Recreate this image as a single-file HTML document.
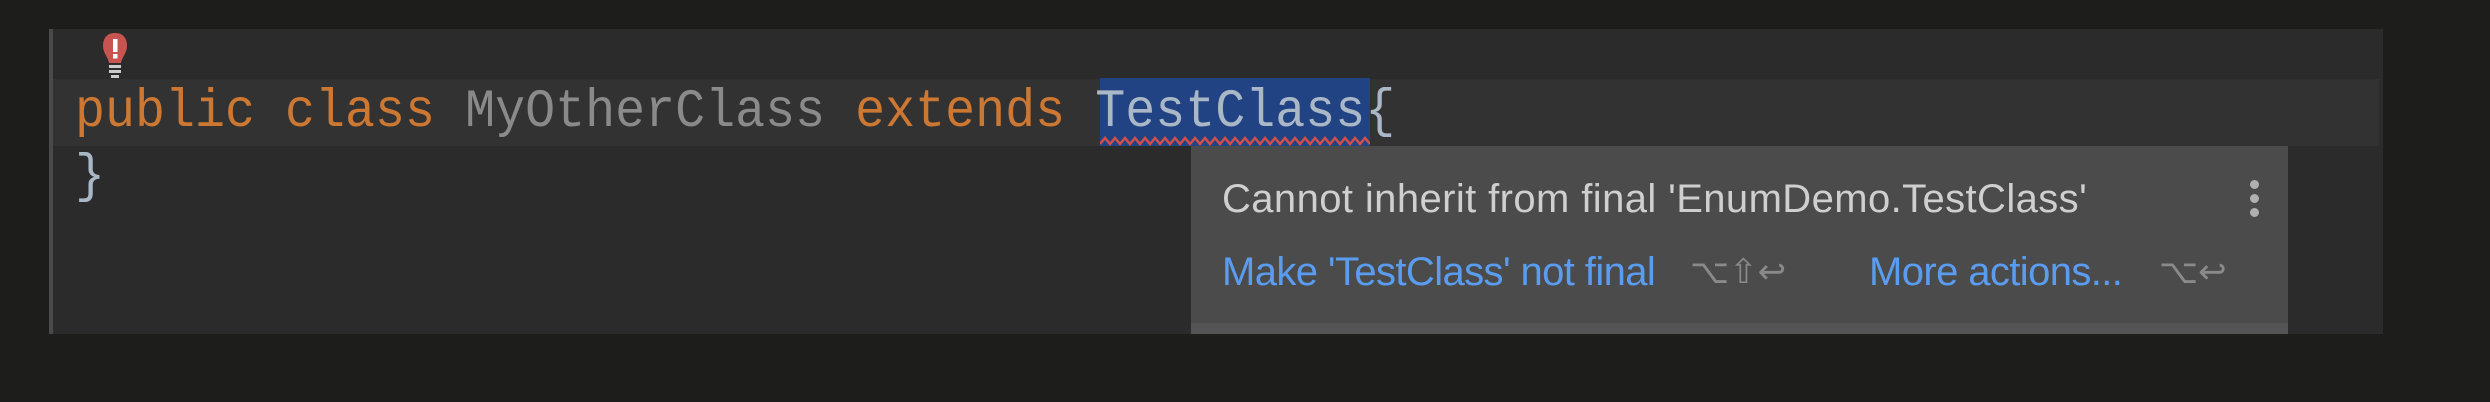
<!DOCTYPE html>
<html><head><style>
body{margin:0;width:2490px;height:402px;background:#1d1d1b;position:relative;overflow:hidden;font-family:"Liberation Mono",monospace}
.ed{position:absolute;left:49px;top:29px;width:2330px;height:305px;background:#2b2b2b;border-left:4px solid #4a4a4a}
.cur{position:absolute;left:53px;top:79px;width:2326px;height:67px;background:#323232}
.code{position:absolute;left:75px;font-size:50px;white-space:pre;line-height:67px;transform:scaleY(1.08);transform-origin:0 50%}
.k{color:#cc7832}.g{color:#8a8a8a}.t{color:#a9b7c6}
.sel{position:absolute;left:1100px;top:78px;width:270px;height:68px;background:#214283}
.pop{position:absolute;left:1191px;top:146px;width:1097px;height:188px;background:#4b4b4b;font-family:"Liberation Sans",sans-serif}
.pop .strip{position:absolute;left:0;bottom:0;width:100%;height:11px;background:#545454}
.msg{position:absolute;left:31px;top:30px;font-size:40px;line-height:46px;color:#cfcfcf;letter-spacing:0.4px;white-space:nowrap}
.lk{position:absolute;top:103px;font-size:40px;line-height:46px;color:#5a9cf0;white-space:nowrap;letter-spacing:-0.6px}
.sc{position:absolute;top:105px;font-size:34px;line-height:42px;color:#8a8a8a;white-space:nowrap}
.dot{position:absolute;left:1059px;width:9px;height:9px;border-radius:50%;background:#b0b0b0}
</style></head><body>
<div class="ed"></div>
<div class="cur"></div>
<div class="sel"></div>
<svg style="position:absolute;left:100px;top:32px" width="30" height="46" viewBox="0 0 30 46">
<path d="M15 1C7 1 3 6 3 14c0 7 5 11 6 17h12c1-6 6-10 6-17C27 6 23 1 15 1z" fill="#c75450"/>
<rect x="13" y="7" width="4.5" height="13" fill="#fff"/><rect x="13" y="22" width="4.5" height="4.5" fill="#fff"/>
<rect x="9" y="33" width="12" height="3" fill="#ccc"/><rect x="9" y="38" width="12" height="3" fill="#ccc"/><rect x="11" y="43" width="8" height="3" fill="#ccc"/>
</svg>
<div class="code" style="top:79px"><span class="k">public class </span><span class="g">MyOtherClass </span><span class="k">extends </span><span class="t">TestClass{</span></div>
<svg style="position:absolute;left:1100px;top:136px" width="270" height="10"><polyline fill="none" stroke="#d2504a" stroke-width="2.5" points="0,8 5,2 10,8 15,2 20,8 25,2 30,8 35,2 40,8 45,2 50,8 55,2 60,8 65,2 70,8 75,2 80,8 85,2 90,8 95,2 100,8 105,2 110,8 115,2 120,8 125,2 130,8 135,2 140,8 145,2 150,8 155,2 160,8 165,2 170,8 175,2 180,8 185,2 190,8 195,2 200,8 205,2 210,8 215,2 220,8 225,2 230,8 235,2 240,8 245,2 250,8 255,2 260,8 265,2 270,8"/></svg>
<div class="code t" style="top:144px">}</div>
<div class="pop">
<div class="msg">Cannot inherit from final 'EnumDemo.TestClass'</div>
<div class="dot" style="top:34px"></div><div class="dot" style="top:48px"></div><div class="dot" style="top:62px"></div>
<div class="lk" style="left:31px">Make 'TestClass' not final</div>
<div class="sc" style="left:499px">⌥⇧↩</div>
<div class="lk" style="left:678px">More actions...</div>
<div class="sc" style="left:968px">⌥↩</div>
<div class="strip"></div>
</div>
</body></html>
